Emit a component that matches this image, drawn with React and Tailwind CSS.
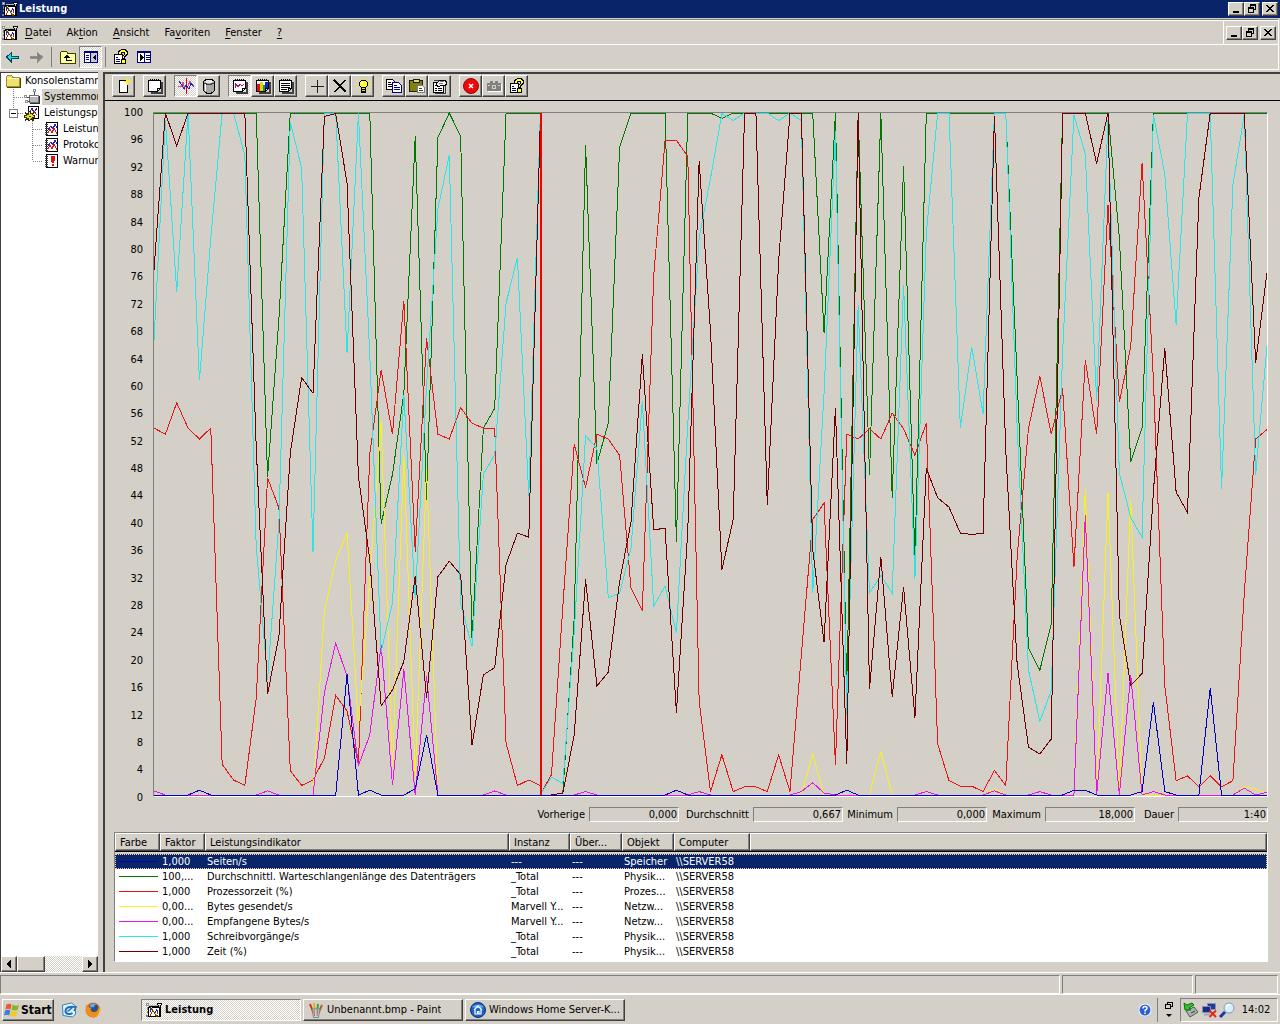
import { clsx } from "clsx";

const SAMPLES = 99;
const CURSOR = 34;

const fill = (spikes) => Array.from({ length: SAMPLES }, (_, i) => spikes[i] ?? 0);

const diskQueue = [
  100, 100, 100, 100, 100, 100, 100, 100, 100, 100, 46.6, 69.9, 100, 100, 100, 100, 100, 100, 100, 100,
  39.8, 47, 58.9, 96.6, 43.3, 96.4, 100, 96.6, 23, 53.8, 56.7, 100, 100, 100, 100, 0, 0.3, 26, 95.3, 48.6,
  54.5, 95, 100, 100, 100, 100, 37.1, 100, 100, 100, 99.2, 100, 100, 100, 100, 100, 100, 100, 100, 67.7,
  100, 15, 100, 46.9, 100, 43.6, 92.2, 34.5, 100, 100, 100, 100, 100, 100, 100, 100, 61, 21.5, 18.3, 25.1,
  100, 100, 100, 100, 100, 81.7, 48.8, 53.8, 100, 100, 100, 100, 100, 100, 100, 100, 100, 100, 100,
];

const cpuTime = [
  53.8, 52.9, 57.5, 53.8, 52.2, 53.8, 4.5, 2.2, 1.4, 14.2, 46.5, 42.1, 3.6, 1.4, 2.2, 5.4, 14.6, 12.3, 4.5, 50,
  62.3, 52.9, 72.5, 35.7, 67, 52.9, 52.2, 56.8, 54.5, 53.8, 53.8, 7.6, 1.4, 2.2, 1.4, 3, 27.7, 51.4, 45.1, 52.9,
  52.2, 49.8, 30.3, 27, 76.1, 96, 96, 93.6, 13.7, 0.5, 5.9, 0.5, 1.2, 1.2, 0.5, 5.9, 0.5, 20.5, 40.4, 42.8,
  4.4, 52.9, 52.2, 53.7, 52.2, 56, 53.7, 49.8, 54.5, 7.5, 2.1, 1.3, 1.3, 0.5, 3.6, 1.4, 34.9, 53.8, 61.4, 52.9,
  59.6, 33.4, 63.8, 52.9, 86.5, 57.6, 65.7, 92.7, 60.9, 16, 2.1, 2.8, 1.2, 2.8, 1.2, 2.1, 29.6, 52.2, 53.6,
];

const diskWrites = [
  66.7, 99, 73.8, 100, 60.8, 81.6, 100, 100, 93.8, 36.5, 16.8, 40, 98.7, 91.9, 35.7, 100, 100, 64.8, 100, 64.5,
  21, 28.2, 58.7, 28.9, 60, 86, 93.8, 28, 21.8, 47, 49.9, 72.1, 78.8, 43.8, 99, 2.6, 1.7, 23.8, 52.7, 50.8,
  28.9, 29.6, 36.2, 57.8, 27.7, 30.6, 23.8, 54.4, 81.7, 90.4, 99.9, 98.9, 100, 100, 100, 98.9, 100, 98.9, 29.6, 59,
  97.3, 11.8, 71.8, 29.6, 32.2, 29.6, 74.8, 31.7, 82.3, 100, 100, 53.8, 65.7, 55.9, 100, 100, 54, 18.3, 10.8, 15.3,
  64.8, 99.7, 94, 57.8, 99, 47.2, 40.7, 37.8, 99.7, 91.1, 68.9, 100, 100, 100, 44.8, 89.5, 99.8, 46.9, 65.9,
];

const diskTime = [
  77, 100, 95.2, 100, 100, 100, 100, 100, 100, 51, 14.8, 23.3, 50.1, 61.2, 58.9, 99.5, 99.9, 89.7, 46.7, 34.5,
  13.1, 15.4, 19.6, 32.1, 14.2, 32, 34.3, 32.3, 7.3, 17.6, 18.7, 33.8, 38.4, 37.8, 98, 0, 0.3, 8.8, 31.6, 16,
  18, 31.3, 40, 64.6, 38.9, 39.1, 12.1, 38.8, 93, 68, 33, 40.4, 100, 100, 42.5, 78.4, 100, 100, 36, 22.4,
  56.8, 4.6, 100, 15.5, 34.9, 14.4, 30.5, 11.3, 47.9, 43.6, 42.2, 38.4, 38.2, 38.4, 99.6, 50.5, 19.2, 7, 6, 8.2,
  100, 100, 100, 92.6, 100, 26.4, 16.1, 17.8, 44.6, 65.5, 44.4, 41.4, 87.5, 100, 100, 100, 100, 63.3, 76.6,
];

const bytesSent = fill({
  15: 26.9, 16: 34.4, 17: 38.4, 18: 10, 19: 31.6, 20: 54.8, 21: 4.2, 22: 49.8, 23: 2.5, 24: 47.9,
  58: 6, 64: 6.4, 74: 0.9, 82: 44.9, 84: 44.3, 86: 43.4, 96: 1.2, 97: 0.9, 98: 0.2,
});

const bytesReceived = fill({
  0: 0.6, 10: 0.6, 15: 15, 16: 22.3, 17: 17.4, 18: 4.3, 19: 8.8, 20: 22, 21: 1.4, 22: 18.4, 24: 17.4,
  30: 0.6, 38: 0.5, 48: 0.5, 57: 0.5, 58: 1.8, 59: 0.3, 68: 0.5, 74: 0.6, 78: 0.5,
  82: 41, 84: 17.9, 86: 17.6, 88: 0.5, 96: 1, 98: 0.4,
});

const pages = fill({
  4: 0.7, 17: 17.7, 19: 0.7, 23: 0.9, 24: 8.8, 46: 0.7, 61: 0.7, 81: 0.7, 82: 0.7, 87: 0.5, 88: 13.6, 89: 0.5, 93: 15.7,
});

const counters = [
  { name: "Seiten/s", factor: "1,000", instance: "---", object: "Speicher", color: "#0000c0", values: pages },
  { name: "Durchschnittl. Warteschlangenlänge des Datenträgers", factor: "100,...", instance: "_Total", object: "Physik...", color: "#007800", values: diskQueue },
  { name: "Prozessorzeit (%)", factor: "1,000", instance: "_Total", object: "Prozes...", color: "#e61414", values: cpuTime },
  { name: "Bytes gesendet/s", factor: "0,00...", instance: "Marvell Y...", object: "Netzw...", color: "#f8f020", values: bytesSent },
  { name: "Empfangene Bytes/s", factor: "0,00...", instance: "Marvell Y...", object: "Netzw...", color: "#e614e6", values: bytesReceived },
  { name: "Schreibvorgänge/s", factor: "1,000", instance: "_Total", object: "Physik...", color: "#28e6e6", values: diskWrites },
  { name: "Zeit (%)", factor: "1,000", instance: "_Total", object: "Physik...", color: "#6c0000", values: diskTime },
];

const stats = [
  { id: "last", label: "Vorherige", value: "0,000", width: "w-[54px]" },
  { id: "avg", label: "Durchschnitt", value: "0,667", width: "w-[74px]" },
  { id: "min", label: "Minimum", value: "0,000", width: "w-[54px]" },
  { id: "max", label: "Maximum", value: "18,000", width: "w-[58px]" },
  { id: "duration", label: "Dauer", value: "1:40", width: "w-[43px]" },
];

const scale = Array.from({ length: 26 }, (_, i) => 100 - i * 4);

const raised =
  "border border-t-white border-l-white border-r-[#404040] border-b-[#404040] shadow-[inset_-1px_-1px_#808080]";
const pressed =
  "border border-t-[#808080] border-l-[#808080] border-r-white border-b-white bg-[repeating-conic-gradient(#ffffff_0_25%,#d4d0c8_0_50%)] bg-[length:2px_2px]";
const sunken = "border border-t-[#808080] border-l-[#808080] border-r-white border-b-white";

function Icon({ children, size = "size-4" }) {
  return (
    <svg viewBox="0 0 16 16" className={clsx("block shrink-0", size)} shapeRendering="crispEdges" fill="none" aria-hidden="true">
      {children}
    </svg>
  );
}

const PerfIcon = () => (
  <Icon>
    <path d="M2 5h12v10H2z" fill="#000" />
    <path d="M3 6h10v8H3z" fill="#fff" />
    <path d="M4 12h1v2H4zM5 10h1v2H5zM9 12h2v1H9zM11 10h1v2h-1z" fill="#e01010" />
    <path d="M4 7h1v3H4zM10 7h1v2h-1zM11 8h1v2h-1zM9 9h1v2H9z" fill="#2020d0" />
    <path d="M4 3h8l2-1v3H3z" fill="#b8b8b8" />
    <path d="M3 4.500h9l1-2h3M11.500 3V1.500H16M14.500 3v12" stroke="#000" />
    <path d="M12 2h3" stroke="#fff" />
    <path d="M4 5h2v2H4zM5 6h2v2H5zM6 8h2v2H6zM8 10h2v2H8zM9 12h2v2H9zM10 13h2v2h-2z" fill="#504800" />
    <path d="M5 5h1v1H5zM6 6h1v1H6zM7 8h1v1H7zM8 9h1v1H8zM9 11h1v1H9zM10 12h1v1h-1z" fill="#f0e090" />
    <path d="M0 1h3v3H0z" fill="#909090" />
    <path d="M1 2h1v1H1z" fill="#fff" />
    <path d="M1 5h1v3H1zM1 9h1v2H1zM0 13h2v2H0z" fill="#808080" />
  </Icon>
);

const HelpDoc = () => (
  <Icon>
    <path d="M1.500 5.500h8v9h-8z" fill="#fff" stroke="#000" />
    <path d="M3 8.500h2M3 10.500h4M3 12.500h4" stroke="#000080" />
    <path d="M6 1h2V0h5v1h1v1h1v4h-1v1h-1v1h-1v2h1v5H8v-5h1V7h1V6h1V4H9v2H5V2h1z" fill="#000" />
    <path d="M7 2h1V1h4v1h1v1h1v2h-1v1h-1v1h-1v2h-1V7h1V6h1V3H8v2H6V3h1zM9 11h3v3H9z" fill="#ffff30" />
  </Icon>
);

const PaneIcon = ({ flip }) => (
  <Icon>
    <path d="M1.500 2.500h13v11h-13z" fill="#fff" stroke="#000080" />
    <path d="M1 2h14v2H1z" fill="#000080" />
    {flip ? (
      <>
        <path d="M8.500 4v9" stroke="#000080" />
        <path d="M10 6.500h4M10 8.500h4M10 10.500h4" stroke="#000080" />
        <path d="M4 5l3.500 3.500L4 12z" fill="#000" />
      </>
    ) : (
      <>
        <path d="M8 4h6v9H8z" fill="#c8c4dc" />
        <path d="M7.500 4v9" stroke="#000080" />
        <path d="M3 6.500h3M3 8.500h3M3 10.500h3" stroke="#000080" />
        <path d="M13 5L9.500 8.500 13 12z" fill="#000" />
      </>
    )}
  </Icon>
);

const ArrowIcon = ({ color, edge, flip }) => (
  <Icon>
    <path
      d={flip ? "M14.500 8l-5-4.500V7H2v2.500h7.500V13z" : "M1.500 8l5-4.500V7H13v2.500H6.500V13z"}
      fill={color}
      stroke={edge}
    />
  </Icon>
);

const FolderUpIcon = () => (
  <Icon>
    <path d="M.5 14.500v-11l1-1h5l1.500 2h7.500v10z" fill="#ffffa0" stroke="#404000" />
    <path d="M6.500 6v5.500h5" stroke="#000" />
    <path d="M3.500 8.500h6L6.500 5.500z" fill="#000" />
  </Icon>
);

const FolderIcon = () => (
  <Icon>
    <path d="M1.500 13.500v-10l1-1h4l1.500 2h6.500v9z" fill="#f0e070" stroke="#a09030" />
    <path d="M2 5.500h12" stroke="#fffbc0" />
    <path d="M2 14.500h13.500V5" stroke="#504800" />
  </Icon>
);

const MonitorIcon = () => (
  <Icon>
    <path d="M5.500 6.500h9v7h-9z" fill="#b8b8b8" stroke="#707070" />
    <path d="M6 7.500h8" stroke="#fff" />
    <path d="M10.500 2v4" stroke="#505050" />
    <path d="M9 0h3v3H9zM0 6h3v3H0zM1 11h3v3H1z" fill="#909090" />
    <path d="M10 1h1v1h-1zM1 7h1v1H1zM2 12h1v1H2z" fill="#fff" />
    <path d="M3 8.500h3M4 12.500h2" stroke="#505050" />
    <path d="M15.500 7v7.500H6" stroke="#303030" />
  </Icon>
);

const LogsIcon = () => (
  <Icon>
    <path d="M4.500 1.500h10v12h-10z" fill="#fff" stroke="#000" />
    <path d="M6 7l2-4 2 5 3-5" stroke="#2020c0" />
    <path d="M8 10l2-4 3 4" stroke="#e01010" />
    <path d="M4 6h3v2h2V7h1v2H9v1h2v3H9v1h1v2H8v-1H6v1H4v-1H2v1H1v-2h1v-1H0v-3h2V9H1V7h1v1h2z" fill="#303000" />
    <path d="M5 7h1v2h2v1h1v1h1v1H8v1H7v1H6v1H5v-2H3v-1H1v-1h2v-1h2z" fill="#e8e030" />
    <path d="M5 11h2v1H5z" fill="#303000" />
  </Icon>
);

const LogPage = ({ alert }) => (
  <Icon>
    <path d="M3.500 1.500h11v13h-11z" fill="#fff" stroke="#000" />
    <path d="M2 3.500h3M2 5.500h3M2 7.500h3M2 9.500h3M2 11.500h3M2 13.500h3" stroke="#404040" />
    {alert ? (
      <>
        <path d="M8 3h4v4l-1 3H9L8 7z" fill="#e01010" />
        <path d="M9 11h2v2H9z" fill="#e01010" />
      </>
    ) : (
      <>
        <path d="M5 9l3-4 2 3 2-5 2 4" stroke="#2020c0" />
        <path d="M5 12l2-4 2 4 2-5 3 6" stroke="#e01010" />
      </>
    )}
  </Icon>
);

const Notebook = ({ children }) => (
  <Icon>
    <path d="M4 15h11V4" stroke="#404040" strokeWidth="2" />
    <path d="M1.500 2.500h12v8l-3 3h-9z" fill="#fff" stroke="#000" />
    <path d="M10.500 13.500v-3h3" stroke="#000" />
    <path d="M3.500 1v2M5.500 1v2M7.500 1v2M9.500 1v2M11.500 1v2" stroke="#000" />
    {children}
  </Icon>
);

const NewSetIcon = () => (
  <Icon>
    <path d="M3.500 2.500h8v12h-8z" fill="#fff" stroke="#000" />
    <path d="M11 0h1v2h1V1h1v1h-1v1h2v1h-2v1h1v1h-1V5h-1v2h-1V5h-1v1H9V5h1V4H8V3h2V2H9V1h1v1h1z" fill="#fff020" />
  </Icon>
);

const ActivityIcon = () => (
  <Icon>
    <path d="M8.500 0v16" stroke="#e00000" />
    <path d="M0 8.500h3l2-4 2 7M10 8l2-5 2 4h2" stroke="#d05080" />
    <path d="M1 3l3 4 2 4 2-4 3 4 2-6 3 4" stroke="#2020c0" />
  </Icon>
);

const DatabaseIcon = () => (
  <Icon>
    <path d="M2.500 3.500v9l3 2.500h5l3-2.500v-9L11 1.500H5z" fill="#a8a8a8" stroke="#000" />
    <path d="M4 3.500h8M5 2.500h6M5 4.500h6" stroke="#e8e8e8" />
    <path d="M4.500 6v7" stroke="#fff" />
    <path d="M3 5l2.500 1h5L13 5" stroke="#404040" />
  </Icon>
);

const BulbIcon = () => (
  <Icon>
    <path
      d="M8 0h1v1H8zM3 1h1v1H3zM13 1h1v1h-1zM5 0h1v1H5zM11 0h1v1h-1zM1 3h2v1H1zM14 3h2v1h-2zM0 6h2v1H0zM3 5h1v1H3zM13 5h1v1h-1zM14 6h2v1h-2zM1 9h2v1H1zM14 9h2v1h-2zM3 12h1v1H3zM13 12h1v1h-1z"
      fill="#f0f040"
    />
    <path d="M4.500 4.500l2-2h4l2 2v3l-2 2h-4l-2-2z" fill="#ffff20" stroke="#000" />
    <path d="M6 9h5v6H6z" fill="#000" />
    <path d="M7 10h3v1H7zM7 12h3v1H7z" fill="#e0e020" />
    <path d="M6 4h2v2H6z" fill="#fff" />
  </Icon>
);

const CopyIcon = () => (
  <Icon>
    <path d="M.5 1.500h6l2 2v8h-8z" fill="#fff" stroke="#000" />
    <path d="M2 4.500h3M2 6.500h5M2 8.500h5" stroke="#000" />
    <path d="M6.500 4.500h6l3 3v7h-9z" fill="#fff" stroke="#000080" />
    <path d="M8 7.500h3M8 9.500h6M8 11.500h6" stroke="#000080" />
  </Icon>
);

const PasteIcon = () => (
  <Icon>
    <path d="M.5 2.500h13v11H.5z" fill="#808010" stroke="#202000" />
    <path d="M4 1h6v3H4z" fill="#d8d890" stroke="#202000" />
    <path d="M8.500 7.500h5l2 2v5h-7z" fill="#fff" stroke="#808080" />
    <path d="M10 10.500h3M10 12.500h4" stroke="#404040" />
  </Icon>
);

const PropertiesIcon = () => (
  <Icon>
    <path d="M1.500 4.500h10v10h-10z" fill="#fff" stroke="#000" />
    <path d="M3 7.500h2M3 10.500h2M3 12.500h2M6 10.500h4M6 12.500h4" stroke="#000" />
    <path d="M4 6l4-4h5l2 3-2 3-3-1-4 2z" fill="#f0f0f0" stroke="#000" />
    <path d="M7 5.500h4M8 3.500h4" stroke="#808080" />
    <path d="M13.500 8v7.500H3M2 2.500h5" stroke="#404040" />
  </Icon>
);

const FreezeIcon = () => (
  <Icon>
    <g shapeRendering="auto">
      <circle cx="8" cy="8" r="7.500" fill="#f00808" stroke="#801010" />
      <path d="M6 6l4 4M10 6l-4 4" stroke="#fff" strokeWidth="1.500" />
    </g>
  </Icon>
);

const CameraIcon = () => (
  <Icon>
    <path d="M1 5h3V3h3v2h2V3h3v2h3v8H1z" fill="#808080" />
    <path d="M2 13.500h13.500V6" stroke="#fff" />
    <circle cx="8" cy="9" r="2.500" fill="#d4d0c8" />
    <path d="M7 8h2v2H7z" fill="#808080" />
    <path d="M2 7.500h2M12 7.500h2" stroke="#d4d0c8" />
  </Icon>
);

const WindowsFlag = () => (
  <svg viewBox="0 0 16 16" className="block size-4 shrink-0" aria-hidden="true">
    <path d="M2.500 2.500Q5 1 7.500 2.500L6.500 7.500Q4 6 1.300 7.500z" fill="#f0582a" />
    <path d="M8.500 2.800Q12 4.500 15 2.800L13.800 7.800Q11 9 7.500 7.800z" fill="#7cba28" />
    <path d="M1.100 8.500Q4 7 6.300 8.500L5.200 13.500Q3 12 0 13.500z" fill="#3d7fe0" />
    <path d="M7.200 8.800Q10.500 10.500 13.600 8.800L12.400 13.800Q9.500 15.500 6.100 13.800z" fill="#f8c820" />
  </svg>
);

const MailIcon = () => (
  <svg viewBox="0 0 16 16" className="block size-4 shrink-0" fill="none" aria-hidden="true">
    <path d="M1.500 3l9-2 4 3v8l-3 3-9.500-1.500z" fill="#dff2fc" stroke="#2a86c8" />
    <path d="M11 5.500C8 4 4.500 6 4.500 9s4 4 7 2" stroke="#1c6cb8" strokeWidth="2" />
    <path d="M6.500 9.500L12 5M10 4.500l5 .5-2 4" stroke="#1c6cb8" strokeWidth="1.500" />
  </svg>
);

const FirefoxIcon = () => (
  <svg viewBox="0 0 16 16" className="block size-4 shrink-0" aria-hidden="true">
    <circle cx="8" cy="8" r="7.500" fill="#e8701a" />
    <circle cx="8.500" cy="6.500" r="5" fill="#28508c" />
    <path d="M5 3q3-2.500 6.500-.5Q9 3 9.500 4.500 8 6 5 5z" fill="#68a8e0" />
    <path d="M1 3q1.500.5 2.500 2l3 1-1 1.500q1 3 4 2.500 3.500-.5 4-5 3 5-.5 8.500Q9 17 4 14 0 11 1 3z" fill="#f08c1c" />
    <path d="M14.500 5q1 6-3.500 9 4.500-1 4.800-6z" fill="#fbd040" />
  </svg>
);

const PaintIcon = () => (
  <svg viewBox="0 0 16 16" className="block size-4 shrink-0" fill="none" aria-hidden="true">
    <path d="M5.500 11L2 2" stroke="#d83020" strokeWidth="2" />
    <path d="M7 11L6 1" stroke="#e8b020" strokeWidth="2" />
    <path d="M9 11l1-9" stroke="#38a048" strokeWidth="2" />
    <path d="M10.500 11l3.500-8" stroke="#b06030" strokeWidth="2" />
    <path d="M4 7h8l-1.500 8.500h-5z" fill="#c8dce0" fillOpacity=".7" stroke="#708890" />
    <path d="M6.500 14L6 8M9 14l.5-6" stroke="#c06040" />
  </svg>
);

const HomeServerIcon = () => (
  <svg viewBox="0 0 16 16" className="block size-4 shrink-0" fill="none" aria-hidden="true">
    <circle cx="8" cy="8" r="7.500" fill="#1c64c0" stroke="#0c2c6c" />
    <path d="M2 5q6-5 12 0-6 2-12 0z" fill="#70b0f0" />
    <path d="M4 8l4-4 4 4M5 7.500V12h6V7.500M7.500 12V9.500h1.500V12" stroke="#fff" strokeWidth="1.200" />
  </svg>
);

const HelpBall = () => (
  <svg viewBox="0 0 16 16" className="block size-4 shrink-0" fill="none" aria-hidden="true">
    <circle cx="8" cy="8" r="7" fill="#fff" stroke="#c0c8e0" />
    <circle cx="8" cy="8" r="5.500" fill="#2c60d0" />
    <path d="M6 6.500q0-2 2-2t2 1.700Q10 7.500 8 8.500v1M8 10.500V12" stroke="#fff" strokeWidth="1.500" />
  </svg>
);

const SafeRemoveIcon = () => (
  <svg viewBox="0 0 16 16" className="block size-4 shrink-0" fill="none" aria-hidden="true">
    <path d="M3 9l8-4 4 5-8 5z" fill="#b0b4b0" stroke="#505850" />
    <path d="M8 11l4-2" stroke="#303830" />
    <path d="M2 8L1 1l3 2 5-2 2 2-5 3 2 2z" fill="#30c030" stroke="#107010" />
  </svg>
);

const NetworkOffIcon = () => (
  <svg viewBox="0 0 16 16" className="block size-4 shrink-0" fill="none" aria-hidden="true">
    <path d="M6.500 1.500h8v6h-8z" fill="#2438a0" stroke="#8890b8" />
    <path d="M1.500 4.500h8v6h-8z" fill="#182c88" stroke="#8890b8" />
    <path d="M3 12.500h6" stroke="#a0a4b8" strokeWidth="2" />
    <path d="M8.500 8.500l6.500 6.500M15 8.500L8.500 15" stroke="#e02818" strokeWidth="2" />
  </svg>
);

const MagnifierIcon = () => (
  <svg viewBox="0 0 16 16" className="block size-4 shrink-0" fill="none" aria-hidden="true">
    <path d="M1 15l5-5" stroke="#1838a8" strokeWidth="3" />
    <circle cx="10" cy="6" r="5" fill="#d8f0fc" stroke="#8098b8" />
    <path d="M7 5q1-2.500 4-2.500" stroke="#fff" strokeWidth="1.500" />
  </svg>
);

function WindowButtons() {
  const btn = clsx(raised, "flex h-[14px] w-4 items-center justify-center bg-[#d4d0c8]");
  return (
    <div className="flex items-center">
      <button className={btn} aria-label="Minimieren">
        <svg viewBox="0 0 10 10" className="block size-[10px]" shapeRendering="crispEdges" aria-hidden="true">
          <path d="M2 7h6v2H2z" />
        </svg>
      </button>
      <button className={btn} aria-label="Wiederherstellen">
        <svg viewBox="0 0 10 10" className="block size-[10px]" shapeRendering="crispEdges" aria-hidden="true">
          <path d="M3 0h6v6H7V5h1V2H4v1H3z" />
          <path fillRule="evenodd" d="M1 3h6v6H1zM2 5v3h4V5z" />
        </svg>
      </button>
      <button className={clsx(btn, "ml-[2px]")} aria-label="Schließen">
        <svg viewBox="0 0 10 10" className="block size-[10px]" shapeRendering="crispEdges" aria-hidden="true">
          <path d="M1 1h2v1h1v1h2V2h1V1h2v1H8v1H7v1H6v1h1v1h1v1h1v1H7V7H6V6H4v1H3v1H1V7h1V6h1V5h1V4H3V3H2V2H1z" />
        </svg>
      </button>
    </div>
  );
}

function MenuItem({ before = "", accel, after = "" }) {
  return (
    <button className="h-5">
      {before}
      <span className="underline underline-offset-2">{accel}</span>
      {after}
    </button>
  );
}

function ToolButton({ on, label, children }) {
  return (
    <button
      aria-label={label}
      className={clsx("flex h-[22px] w-[23px] items-center justify-center", on ? pressed : raised)}
    >
      {children}
    </button>
  );
}

function TreeItem({ icon, label, indent, selected }) {
  return (
    <li className={clsx("flex h-4 items-center whitespace-nowrap", indent)}>
      {icon}
      <span className={clsx("ml-[2px] h-4 pr-8 pl-[2px] leading-4", selected && "bg-[#d4d0c8]")}>{label}</span>
    </li>
  );
}

function Tree() {
  return (
    <nav className="flex w-[98px] shrink-0 flex-col overflow-hidden border-t border-l border-[#404040] bg-white">
      <ul className="relative flex-1 overflow-hidden">
        <TreeItem icon={<FolderIcon />} label="Konsolenstamm" indent="pl-[4px]" />
        <TreeItem icon={<MonitorIcon />} label="Systemmonitor" indent="pl-[23px]" selected />
        <TreeItem icon={<LogsIcon />} label="Leistungsprotokolle" indent="pl-[23px]" />
        <TreeItem icon={<LogPage />} label="Leistungsindikatoren" indent="pl-[42px]" />
        <TreeItem icon={<LogPage />} label="Protokolle" indent="pl-[42px]" />
        <TreeItem icon={<LogPage alert />} label="Warnungen" indent="pl-[42px]" />
        <svg className="absolute top-0 left-0 h-24 w-12" viewBox="0 0 48 96" fill="none" shapeRendering="crispEdges" aria-hidden="true">
          <path d="M12.500 16v20M13 24.500h10M17 40.500h6M31.500 48v40M32 56.500h10M32 72.500h10M32 88.500h10" stroke="#808080" strokeDasharray="1 1" />
          <path d="M8.500 36.500h8v8h-8z" fill="#fff" stroke="#808080" />
          <path d="M10 40.500h5" stroke="#000" />
        </svg>
      </ul>
      <div className="flex h-4 bg-[repeating-conic-gradient(#ffffff_0_25%,#d4d0c8_0_50%)] bg-[length:2px_2px]">
        <button className={clsx(raised, "flex w-4 items-center justify-center bg-[#d4d0c8]")} aria-label="Nach links">
          <Icon size="size-3">
            <path d="M11 2v12L5 8z" fill="#000" />
          </Icon>
        </button>
        <div className={clsx(raised, "w-7 bg-[#d4d0c8]")} />
        <div className="flex-1" />
        <button className={clsx(raised, "flex w-4 items-center justify-center bg-[#d4d0c8]")} aria-label="Nach rechts">
          <Icon size="size-3">
            <path d="M5 2v12l6-6z" fill="#000" />
          </Icon>
        </button>
      </div>
    </nav>
  );
}

function MonitorToolbar() {
  return (
    <div className="flex h-[27px] shrink-0 items-start gap-2 border-b border-black pt-[1px] pl-[7px]">
      <ToolButton label="Neuer Leistungsindikatorensatz"><NewSetIcon /></ToolButton>
      <ToolButton label="Anzeige löschen"><Notebook /></ToolButton>
      <div className="flex">
        <ToolButton on label="Aktuelle Aktivität"><ActivityIcon /></ToolButton>
        <ToolButton label="Protokolldaten"><DatabaseIcon /></ToolButton>
      </div>
      <div className="flex">
        <ToolButton on label="Diagramm">
          <Notebook><path d="M3 10V5l3 4 2-3 2 2 2-2" stroke="#b01060" /></Notebook>
        </ToolButton>
        <ToolButton label="Histogramm">
          <Notebook>
            <path d="M2 6h3v7H2z" fill="#e01010" />
            <path d="M5 4h3v9H5z" fill="#e8d010" />
            <path d="M8 7h2v6H8z" fill="#10a030" />
            <path d="M10 4h3v6h-3z" fill="#1020d0" />
          </Notebook>
        </ToolButton>
        <ToolButton label="Bericht">
          <Notebook><path d="M3 5.500h9M3 7.500h9M3 9.500h9M3 11.500h6" stroke="#000" /></Notebook>
        </ToolButton>
      </div>
      <div className="flex">
        <ToolButton label="Hinzufügen">
          <Icon><path d="M8.500 2v13M2 8.500h13" stroke="#202020" /></Icon>
        </ToolButton>
        <ToolButton label="Löschen">
          <Icon><path d="M2 2l12 12M13 2L3 14" stroke="#000" strokeWidth="1.500" /></Icon>
        </ToolButton>
        <ToolButton label="Markierung"><BulbIcon /></ToolButton>
      </div>
      <div className="flex">
        <ToolButton label="Kopieren"><CopyIcon /></ToolButton>
        <ToolButton label="Einfügen"><PasteIcon /></ToolButton>
        <ToolButton label="Eigenschaften"><PropertiesIcon /></ToolButton>
      </div>
      <div className="flex">
        <ToolButton label="Anzeige fixieren"><FreezeIcon /></ToolButton>
        <ToolButton label="Daten aktualisieren"><CameraIcon /></ToolButton>
        <ToolButton label="Hilfe"><HelpDoc /></ToolButton>
      </div>
    </div>
  );
}

const toPoints = (values, start) => values.map((v, i) => `${(i + start) * 10},${100 - v}`).join(" ");

function Chart() {
  // selected counter is drawn last, on top of the others
  const ordered = [...counters.slice(1), counters[0]];
  return (
    <div className="flex min-h-0 flex-1 pr-3 pl-2">
      <div className="-mt-[6px] -mb-[8px] flex w-[30px] flex-col justify-between text-right">
        {scale.map((n) => (
          <span key={n}>{n}</span>
        ))}
      </div>
      <div className={clsx(sunken, "ml-[10px] min-w-0 flex-1 pb-[1px]")}>
        <svg
          viewBox="0 0 980 100"
          preserveAspectRatio="none"
          className="block h-full w-full overflow-visible"
          fill="none"
          shapeRendering="crispEdges"
          role="img"
          aria-label="Leistungsdiagramm"
        >
          {ordered.map((c) => (
            <g key={c.name} stroke={c.color}>
              <polyline points={toPoints(c.values.slice(0, CURSOR + 1), 0)} vectorEffect="non-scaling-stroke" />
              <polyline points={toPoints([0, ...c.values.slice(CURSOR + 1)], CURSOR)} vectorEffect="non-scaling-stroke" />
            </g>
          ))}
          <line x1="341" x2="341" y1="0" y2="100" stroke="#f00000" strokeWidth="2" vectorEffect="non-scaling-stroke" />
        </svg>
      </div>
    </div>
  );
}

function StatsBar() {
  return (
    <div className="flex shrink-0 justify-end pr-3">
      {stats.map((s) => (
        <div key={s.id} className="flex h-[15px] items-center">
          <label htmlFor={s.id} className={clsx("pr-1 text-right whitespace-nowrap", s.width)}>{s.label}</label>
          <input id={s.id} readOnly value={s.value} className={clsx(sunken, "h-[15px] w-[90px] pr-[1px] text-right")} />
        </div>
      ))}
    </div>
  );
}

const columns = [
  { title: "Farbe", width: "w-[45px]" },
  { title: "Faktor", width: "w-[45px]" },
  { title: "Leistungsindikator", width: "w-[304px]" },
  { title: "Instanz", width: "w-[61px]" },
  { title: "Über...", width: "w-[52px]" },
  { title: "Objekt", width: "w-[52px]" },
  { title: "Computer", width: "w-[76px]" },
  { title: "", width: "" },
];

function CounterTable() {
  return (
    <div className={clsx(sunken, "mr-3 ml-[9px] h-[130px] shrink-0 overflow-hidden bg-white")}>
      <table className="w-full table-fixed border-collapse text-left">
        <thead>
          <tr className="h-[18px] border-b border-black bg-[#d4d0c8]">
            {columns.map((c) => (
              <th key={c.title} className={clsx("p-0 font-normal", c.width)}>
                <div className={clsx(raised, "h-[18px] pl-1 leading-[17px]")}>{c.title}</div>
              </th>
            ))}
          </tr>
          <tr className="h-[2px] bg-[#d4d0c8]"><td colSpan={8} className="p-0" /></tr>
        </thead>
        <tbody>
          {counters.map((c, i) => (
            <tr
              key={c.name}
              className={clsx(
                "h-[15px] leading-[15px] whitespace-nowrap *:p-0",
                i === 0 && "bg-[#0a246a] text-white outline-1 -outline-offset-1 outline-[#f5db95] outline-dotted"
              )}
            >
              <td>
                <svg viewBox="0 0 44 15" className="block h-[15px] w-[44px]" shapeRendering="crispEdges" aria-hidden="true">
                  <path d="M4 7h39v1H4z" fill={c.color} />
                </svg>
              </td>
              <td><div className="pl-[2px]">{c.factor}</div></td>
              <td><div className="pl-[2px]">{c.name}</div></td>
              <td><div className="pl-[2px]">{c.instance}</div></td>
              <td><div className="pl-[2px]">---</div></td>
              <td><div className="pl-[2px]">{c.object}</div></td>
              <td><div className="pl-[2px]">\\SERVER58</div></td>
              <td />
            </tr>
          ))}
        </tbody>
      </table>
    </div>
  );
}

function TaskButton({ icon, label, active }) {
  return (
    <button className={clsx("flex h-[22px] w-[160px] items-center gap-[3px] pl-1 text-left", active ? clsx(pressed, "font-bold") : raised)}>
      {icon}
      <span className="truncate">{label}</span>
    </button>
  );
}

export default function App() {
  return (
    <div className="flex h-screen w-full flex-col overflow-hidden bg-[#d4d0c8] font-['DejaVu_Sans_Condensed','DejaVu_Sans',sans-serif] text-[11px] leading-[14px] text-black">
      <header className="flex h-[18px] shrink-0 items-center bg-[#0a246a] pr-[2px] pl-[2px]">
        <PerfIcon />
        <h1 className="ml-[1px] flex-1 font-bold text-white">Leistung</h1>
        <WindowButtons />
      </header>

      <div className={clsx(sunken, "mt-[1px] mr-[1px] flex shrink-0 flex-col border-l-white")}>
        <div className="flex h-[25px] items-center border-t border-b border-t-white border-b-white pl-[1px]">
          <PerfIcon />
          <div className="ml-[7px] flex flex-1 gap-[15px]">
            <MenuItem accel="D" after="atei" />
            <MenuItem before="Ak" accel="t" after="ion" />
            <MenuItem accel="A" after="nsicht" />
            <MenuItem before="Fa" accel="v" after="oriten" />
            <MenuItem accel="F" after="enster" />
            <MenuItem accel="?" />
          </div>
          <div className="flex h-full items-center border-l border-white pr-[2px] pl-[2px]">
            <WindowButtons />
          </div>
        </div>
        <div className="flex h-6 items-center pl-1">
          <button aria-label="Zurück"><ArrowIcon color="#20e0e8" edge="#004858" /></button>
          <button className="ml-[7px]" aria-label="Vorwärts"><ArrowIcon color="#808080" edge="#909090" flip /></button>
          <span className="ml-[7px] h-5 border-l border-[#808080]" />
          <button className="ml-2" aria-label="Eine Ebene nach oben"><FolderUpIcon /></button>
          <button className={clsx(pressed, "ml-[3px] flex h-[22px] w-[23px] items-center justify-center")} aria-label="Konsolenstruktur">
            <PaneIcon />
          </button>
          <span className="ml-[3px] h-5 border-l border-[#808080]" />
          <button className="ml-[7px]" aria-label="Hilfe"><HelpDoc /></button>
          <button className="ml-[7px]" aria-label="Aktionsbereich"><PaneIcon flip /></button>
        </div>
      </div>

      <main className="mt-[2px] flex min-h-0 flex-1">
        <Tree />
        <section className="ml-[5px] flex min-w-0 flex-1 flex-col border-t-2 border-l-2 border-[#404040]">
          <MonitorToolbar />
          <div className="flex min-h-0 flex-1 flex-col gap-[10px] pt-[11px] pb-[10px]">
            <Chart />
            <StatsBar />
            <CounterTable />
          </div>
        </section>
      </main>

      <div className="flex h-[22px] shrink-0 gap-[2px] border-t border-white pt-[2px] pr-[2px]">
        <div className={clsx(sunken, "flex-1")} />
        <div className={clsx(sunken, "w-[131px]")} />
        <div className={clsx(sunken, "w-[83px]")} />
      </div>

      <footer className="flex h-[30px] shrink-0 items-center border-t border-white pr-[2px] pl-[2px]">
        <button className={clsx(raised, "flex h-[22px] w-[52px] items-center gap-[1px] pl-[1px] text-[12px] font-bold")}>
          <WindowsFlag />
          Start
        </button>
        <div className="ml-[7px] flex w-20 gap-2">
          <button aria-label="E-Mail"><MailIcon /></button>
          <button aria-label="Firefox"><FirefoxIcon /></button>
        </div>
        <div className="flex flex-1 gap-[2px]">
          <TaskButton active icon={<PerfIcon />} label="Leistung" />
          <TaskButton icon={<PaintIcon />} label="Unbenannt.bmp - Paint" />
          <TaskButton icon={<HomeServerIcon />} label="Windows Home Server-K..." />
        </div>
        <button className="mr-1" aria-label="Hilfe und Support"><HelpBall /></button>
        <div className="flex h-6 w-[23px] flex-col items-center justify-between border-l border-[#808080] py-1">
          <svg viewBox="0 0 10 8" className="block h-2 w-[10px]" fill="none" stroke="#000" shapeRendering="crispEdges" aria-hidden="true">
            <path d="M3.500 .5h5v4h-5z" />
            <path d="M1.500 2.500h5v4h-5z" fill="#d4d0c8" />
          </svg>
          <svg viewBox="0 0 6 4" className="block h-1 w-[6px]" aria-hidden="true">
            <path d="M0 0h6L3 3z" />
          </svg>
        </div>
        <div className={clsx(sunken, "flex h-6 w-[98px] items-center gap-[2px] pl-[2px]")}>
          <SafeRemoveIcon />
          <NetworkOffIcon />
          <MagnifierIcon />
          <time className="flex-1 pr-[2px] text-center">14:02</time>
        </div>
      </footer>
    </div>
  );
}
